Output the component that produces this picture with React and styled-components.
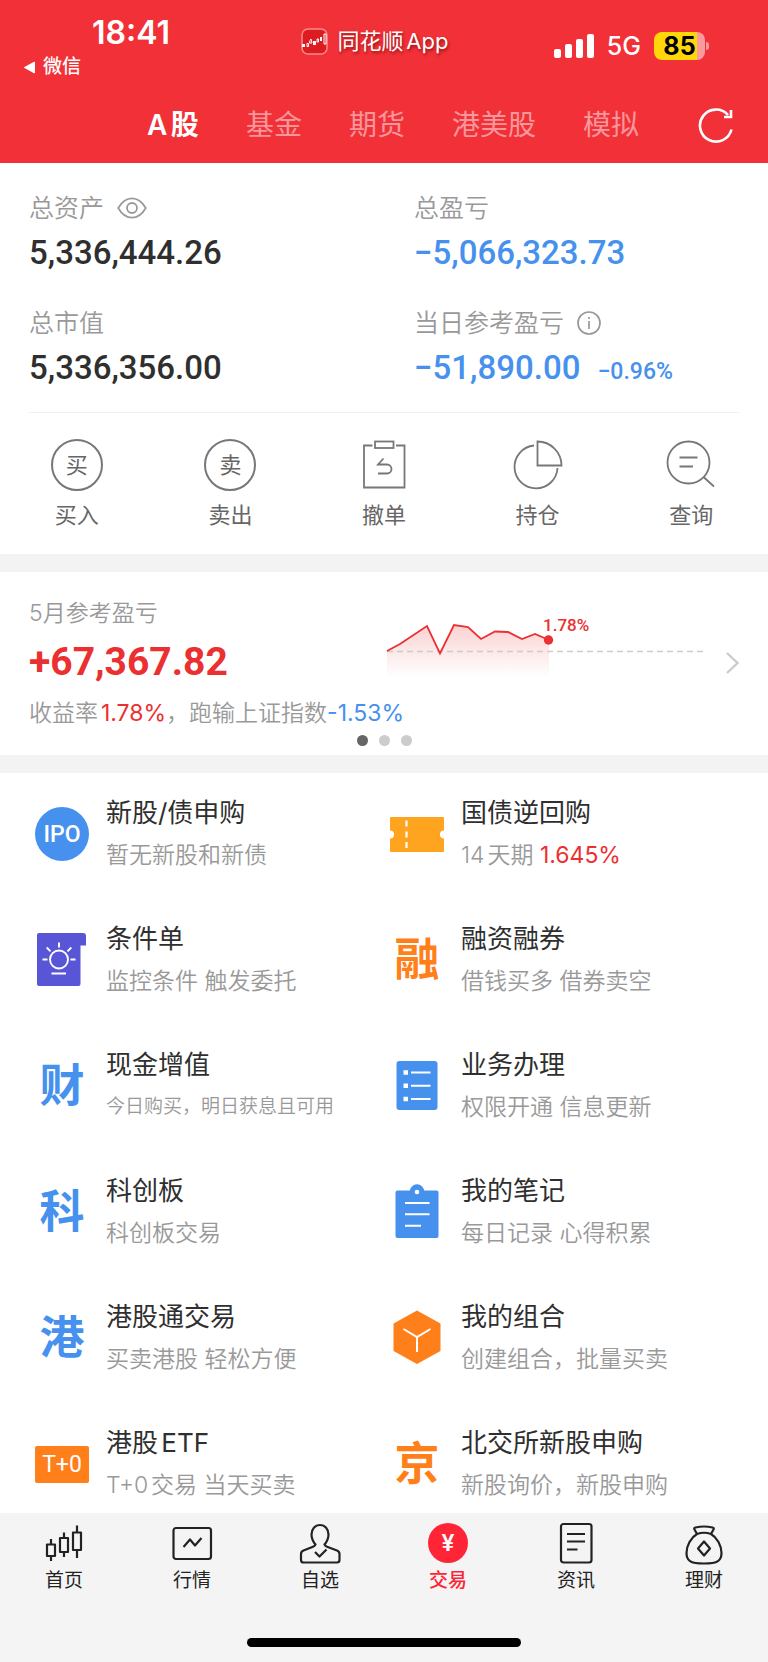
import React from 'react';
import styled, { createGlobalStyle, css } from 'styled-components';

const color = {
  brand: '#f23037',
  red: '#ea3030',
  blue: '#4691ee',
  ink: '#2f2f2f',
  muted: '#999999',
  grey: '#666666',
  band: '#f3f3f3',
  orange: '#ff7f1a',
  amber: '#ffa41f',
  purple: '#5855d6',
};

const numberFont = css`
  font-family: Roboto, 'Liberation Sans', sans-serif;
`;

const GlobalStyle = createGlobalStyle`
  *, *::before, *::after { box-sizing: border-box; }
  body {
    margin: 0;
    background: #ffffff;
    color: ${color.ink};
    font-family: Inter, 'Noto Sans CJK SC', sans-serif;
  }
  button {
    margin: 0;
    padding: 0;
    border: 0;
    background: none;
    color: inherit;
    font: inherit;
    cursor: pointer;
  }
  a { color: inherit; text-decoration: none; }
  h2, p, dl, dt, dd, ul { margin: 0; padding: 0; font-weight: inherit; list-style: none; }
  svg { display: block; flex: none; }
`;

const Page = styled.div`
  min-height: 100vh;
  display: flex;
  flex-direction: column;
`;

/* ---------- header ---------- */

const Header = styled.header`
  height: 163px;
  background: ${color.brand};
  color: #ffffff;
  display: flex;
  flex-direction: column;
`;

const StatusBar = styled.div`
  height: 86px;
  padding: 0 42px 0 23px;
  display: grid;
  grid-template-columns: 1fr auto 1fr;
`;

const ClockBlock = styled.div`
  display: flex;
  flex-direction: column;
  align-items: flex-start;
  padding-top: 14px;
`;

const Clock = styled.span`
  padding-left: 69px;
  font-size: 32px;
  font-weight: 600;
  line-height: 38px;
`;

const BackLink = styled.a`
  display: flex;
  align-items: center;
  gap: 8px;
  font-size: 19px;
  font-weight: 500;
  line-height: 30px;
`;

const AppTag = styled.div`
  align-self: start;
  display: flex;
  align-items: center;
  gap: 10px;
  padding-top: 24px;
  font-size: 22px;
  line-height: 34px;
  text-shadow: 1px 2px 3px rgba(90, 0, 0, 0.6);
  text-autospace: normal;
`;

const StatusIcons = styled.div`
  align-self: start;
  justify-self: end;
  display: flex;
  align-items: center;
  gap: 13px;
  padding: 30px 17px 0 0;
  font-size: 25px;
  font-weight: 500;
  line-height: 32px;
`;

const Battery = styled.div`
  display: flex;
  align-items: center;
  gap: 1px;
`;

const BatteryLevel = styled.span`
  width: 51px;
  height: 28px;
  border-radius: 8px;
  background: linear-gradient(90deg, #ffd60a 85%, #f99a9d 85%);
  color: #000000;
  font-size: 25px;
  font-weight: 700;
  line-height: 28px;
  text-align: center;
`;

const BatteryTip = styled.span`
  width: 3px;
  height: 8px;
  border-radius: 0 3px 3px 0;
  background: #f99a9d;
`;

const TopBar = styled.div`
  height: 77px;
  padding: 0 34px 0 147px;
  display: flex;
  align-items: center;
  justify-content: space-between;
`;

const MarketTabs = styled.nav`
  display: flex;
  gap: 47px;
`;

const MarketTab = styled.button`
  font-size: 28px;
  line-height: 40px;
  white-space: nowrap;
  text-autospace: normal;
  font-weight: ${(p) => (p.$active ? 600 : 400)};
  color: ${(p) => (p.$active ? '#ffffff' : 'rgba(255, 255, 255, 0.5)')};
`;

/* ---------- assets ---------- */

const AssetGrid = styled.dl`
  padding: 27px 0 22px 29px;
  display: grid;
  grid-template-columns: 385fr 354fr;
  row-gap: 30px;
`;

const AssetLabel = styled.dt`
  display: flex;
  align-items: center;
  gap: 13px;
  font-size: 25px;
  font-weight: 350;
  line-height: 36px;
  color: ${color.muted};
`;

const AssetValue = styled.dd`
  display: flex;
  align-items: baseline;
  gap: 17px;
  padding-top: 5px;
  ${numberFont}
  font-size: 33px;
  font-weight: 500;
  line-height: 44px;
  color: ${(p) => (p.$down ? color.blue : color.ink)};
`;

const Rate = styled.span`
  font-size: 23px;
  line-height: 24px;
`;

const Divider = styled.hr`
  margin: 0 29px;
  border: 0;
  height: 1px;
  background: #f0f0f0;
`;

const Actions = styled.nav`
  padding: 26px 0 24px;
  display: grid;
  grid-template-columns: repeat(5, 1fr);
`;

const Action = styled.button`
  display: flex;
  flex-direction: column;
  align-items: center;
  gap: 9px;
  font-size: 22px;
  line-height: 30px;
  color: ${color.grey};
`;

const RingGlyph = styled.span`
  width: 52px;
  height: 52px;
  border: 2px solid #777777;
  border-radius: 50%;
  display: flex;
  align-items: center;
  justify-content: center;
`;

const Band = styled.div`
  height: 18px;
  background: ${color.band};
`;

/* ---------- monthly result ---------- */

const Month = styled.section`
  padding: 24px 0 9px;
`;

const MonthTop = styled.a`
  padding: 0 29px;
  display: flex;
  gap: 10px;
`;

const MonthText = styled.div`
  flex: 1;
`;

const MonthLabel = styled.p`
  font-size: 23px;
  font-weight: 350;
  line-height: 34px;
  color: ${color.muted};
`;

const MonthValue = styled.p`
  padding-top: 4px;
  ${numberFont}
  font-size: 39px;
  font-weight: 700;
  line-height: 56px;
  color: ${color.red};
`;

const MonthNote = styled.p`
  padding: 6px 29px 5px;
  font-size: 23px;
  font-weight: 350;
  line-height: 34px;
  color: ${color.muted};
  text-autospace: normal;
`;

const Tone = styled.span`
  font-weight: 400;
  color: ${(p) => (p.$down ? color.blue : color.red)};
`;

const ChevronSlot = styled.span`
  align-self: flex-end;
  padding-bottom: 16px;
`;

const ChartText = styled.text`
  ${numberFont}
  font-size: 17px;
  font-weight: 500;
  fill: ${color.red};
`;

const Dots = styled.div`
  display: flex;
  justify-content: center;
  gap: 11px;
`;

const Dot = styled.span`
  width: 11px;
  height: 11px;
  border-radius: 50%;
  background: ${(p) => (p.$active ? '#666666' : '#cccccc')};
`;

/* ---------- services ---------- */

const Services = styled.ul`
  padding: 19px 28px 7px 30px;
  display: grid;
  grid-template-columns: 1fr 1fr;
  row-gap: 42px;
`;

const ServiceLink = styled.a`
  display: flex;
  align-items: center;
  gap: 12px;
`;

const IconSlot = styled.span`
  width: 64px;
  display: flex;
  justify-content: center;
`;

const ServiceText = styled.span`
  display: flex;
  flex-direction: column;
  white-space: nowrap;
  text-autospace: normal;
`;

const ServiceTitle = styled.span`
  font-size: 26px;
  line-height: 42px;
  color: ${color.ink};
`;

const ServiceNote = styled.span`
  font-size: ${(p) => (p.$small ? 19 : 23)}px;
  font-weight: 350;
  line-height: 42px;
  color: ${color.muted};
`;

const GlyphIcon = styled.span`
  color: ${(p) => p.$tint};
  font-size: 45px;
  font-weight: 700;
  line-height: 56px;
`;

const Badge = styled.span`
  width: 54px;
  height: ${(p) => (p.$round ? 54 : 37)}px;
  border-radius: ${(p) => (p.$round ? '50%' : '2px')};
  background: ${(p) => p.$tint};
  color: #ffffff;
  display: flex;
  align-items: center;
  justify-content: center;
  ${numberFont}
  font-size: 23px;
  font-weight: ${(p) => (p.$round ? 500 : 400)};
`;

/* ---------- bottom bar ---------- */

const BottomBar = styled.footer`
  margin-top: auto;
  background: #f4f4f4;
  display: flex;
  flex-direction: column;
  align-items: center;
`;

const BottomTabs = styled.nav`
  width: 100%;
  padding-top: 8px;
  display: grid;
  grid-template-columns: repeat(6, 1fr);
`;

const BottomTab = styled.a`
  display: flex;
  flex-direction: column;
  align-items: center;
  gap: 2px;
  font-size: 19px;
  line-height: 28px;
  font-weight: ${(p) => (p.$active ? 500 : 400)};
  color: ${(p) => (p.$active ? '#ff2436' : '#222222')};
`;

const HomeIndicator = styled.div`
  width: 274px;
  height: 9px;
  margin: 43px 0 15px;
  border-radius: 5px;
  background: #000000;
`;

/* ---------- drawings ---------- */

const AppLogo = () => (
  <svg width="27" height="27" viewBox="0 0 27 27">
    <rect x="1" y="1" width="25" height="25" rx="6" fill="#dd1c22" stroke="#f78a8e" strokeWidth="1.5" />
    <g fill="#fff">
      <rect x="1" y="16" width="3" height="3" />
      <rect x="12" y="13" width="3" height="4" />
      <rect x="19" y="9" width="2" height="4" />
    </g>
    <g fill="none" stroke="#fff">
      <path d="M6 15.5v3h1.5v-3zM9 12.5l-0.5 2.5h2.5l-1-4zM16 11v3h1.5v-3zM23 6v10h2V6z" />
    </g>
  </svg>
);

const Signal = () => (
  <svg width="40" height="26" viewBox="0 0 40 26" fill="#fff">
    <rect x="0" y="16" width="7" height="9" rx="2" />
    <rect x="11" y="11" width="7" height="14" rx="2" />
    <rect x="22" y="6" width="7" height="19" rx="2" />
    <rect x="33" y="1" width="7" height="24" rx="2" />
  </svg>
);

const BackArrow = () => (
  <svg width="12" height="13" viewBox="0 0 12 13" fill="#fff">
    <path d="M0.6 6.5 11 0.7Q12 0.5 12 1.5V11.5Q12 12.5 11 12.3Z" />
  </svg>
);

const Refresh = () => (
  <svg width="36" height="36" viewBox="0 0 36 36" fill="none" stroke="#fff" strokeWidth="2.6">
    <path d="M33.5 22.5A16 16 0 1 1 30 8" />
    <path d="M33 3V10H26" />
  </svg>
);

const Eye = () => (
  <svg width="30" height="22" viewBox="0 0 30 22" fill="none" stroke="#999" strokeWidth="1.8">
    <path d="M1.2 11C5 4.5 9.5 1.3 15 1.3S25 4.5 28.8 11C25 17.5 20.5 20.7 15 20.7S5 17.5 1.2 11Z" />
    <circle cx="15" cy="11" r="5" />
  </svg>
);

const Info = () => (
  <svg width="24" height="24" viewBox="0 0 24 24" fill="none" stroke="#999" strokeWidth="1.7">
    <circle cx="12" cy="12" r="11" />
    <path d="M12 10v8M12 6v2" />
  </svg>
);

const lineIcon = { width: 52, height: 52, viewBox: '0 0 52 52', fill: 'none', stroke: '#777', strokeWidth: 1.8 };

const CancelIcon = () => (
  <svg {...lineIcon}>
    <path d="M14.5 6.5H6V48.5H46.5V6.5H38" />
    <rect x="17" y="2.5" width="18.5" height="6.5" />
    <path d="M25.5 19.5 20 25.5H29A4.500 4.500 0 0 1 29 34.500H20" />
  </svg>
);

const PositionIcon = () => (
  <svg {...lineIcon}>
    <path d="M22 6.5A21.5 21.5 0 1 0 45.5 29" />
    <path d="M25.5 2.5V26.5H49.5A24 24 0 0 0 25.5 2.5Z" />
  </svg>
);

const QueryIcon = () => (
  <svg {...lineIcon}>
    <circle cx="23.5" cy="23.5" r="21" />
    <path d="M38.5 38 49 47.5M14.5 18.5H32.5M14.5 27.5H28" />
  </svg>
);

const TrendChart = () => (
  <svg width="330" height="94" viewBox="0 0 330 94">
    <defs>
      <linearGradient id="trendFill" x1="0" y1="0" x2="0" y2="1">
        <stop offset="0" stopColor="#ea3030" stopOpacity="0.22" />
        <stop offset="1" stopColor="#ea3030" stopOpacity="0" />
      </linearGradient>
    </defs>
    <path
      d="M1 55 14 48 41 30 54 57.5 68 29 82 31 95 43 109 35.5 122 36 136 43 149 38 163 44V81H1Z"
      fill="url(#trendFill)"
    />
    <path d="M1 55.500H321" stroke="#cccccc" strokeWidth="1.3" strokeDasharray="6 4" />
    <path
      d="M1 55 14 48 41 30 54 57.5 68 29 82 31 95 43 109 35.5 122 36 136 43 149 38 163 44"
      fill="none"
      stroke="#ea3030"
      strokeWidth="1.8"
    />
    <circle cx="162.5" cy="44" r="4.7" fill="#ea3030" />
    <ChartText x="157" y="35">1.78%</ChartText>
  </svg>
);

const Chevron = () => (
  <svg width="13" height="22" viewBox="0 0 13 22" fill="none" stroke="#ccc" strokeWidth="2.4">
    <path d="M1 1 11.5 11 1 21" />
  </svg>
);

const tile = { width: 56, height: 56, viewBox: '0 0 56 56' };

const ConditionIcon = () => (
  <svg {...tile}>
    <path d="M5 1H49Q52 1 52 4V13.5H46.5V52Q46.5 54 44.5 54H5Q3 54 3 52V3Q3 1 5 1Z" fill={color.purple} />
    <g fill="none" stroke="#fff" strokeWidth="1.9">
      <circle cx="25" cy="27.5" r="9" />
      <path d="M25 10.5V15.5M8.5 27.5H13.5M36.5 27.5H41.5M12.7 15.5 16.5 19.3M37.3 15.5 33.5 19.3M17.5 41.5H32" />
    </g>
  </svg>
);

const TicketIcon = () => (
  <svg {...tile}>
    <path
      d="M2 11H54Q55 11 55 12V24.5A4 4 0 0 0 55 32.5V45Q55 46 54 46H2Q1 46 1 45V32.5A4 4 0 0 0 1 24.5V12Q1 11 2 11Z"
      fill={color.amber}
    />
    <path d="M17.5 14.5V20.5M17.5 25.5V31.5M17.5 36V42" stroke="#fff" strokeWidth="2.2" />
  </svg>
);

const BusinessIcon = () => (
  <svg {...tile}>
    <rect x="7.5" y="3" width="41" height="49" rx="3" fill={color.blue} />
    <path d="M14.5 14.5H19M14.5 27.7H19M14.5 41H19" stroke="#fff" strokeWidth="4.5" />
    <path d="M22 14.5H41.5M22 27.7H41.5M22 41H41.5" stroke="#fff" strokeWidth="2" />
  </svg>
);

const NotesIcon = () => (
  <svg {...tile}>
    <circle cx="28" cy="7.5" r="7.2" fill={color.blue} />
    <rect x="6.5" y="6.5" width="43" height="47.5" rx="2" fill={color.blue} />
    <circle cx="28" cy="8" r="2.3" fill="#fff" />
    <path d="M16 19H40.5M16 30.3H40.5M16 41.7H32" stroke="#fff" strokeWidth="2" />
  </svg>
);

const PortfolioIcon = () => (
  <svg {...tile}>
    <path
      d="M28 1.5 50.5 14V40.5L28 53 5.5 40.5V14Z"
      fill={color.orange}
      stroke={color.orange}
      strokeWidth="2"
      strokeLinejoin="round"
    />
    <path d="M14.5 19 28 27 41.5 19M28 27V42" fill="none" stroke="#fff" strokeWidth="2" />
  </svg>
);

const navIcon = {
  width: 44,
  height: 44,
  viewBox: '0 0 44 44',
  fill: 'none',
  stroke: '#222',
  strokeWidth: 2.2,
  strokeLinejoin: 'round',
};

const HomeIcon = () => (
  <svg {...navIcon}>
    <path d="M5 23.5H13V35H5ZM9 18V23.5M9 35V40M18 17H26V31H18ZM22 11.5V17M22 31V36M31 11.5H39V29H31ZM35 4.5V11.5M35 29V37" />
  </svg>
);

const QuotesIcon = () => (
  <svg {...navIcon}>
    <rect x="3.5" y="7" width="37.5" height="31" rx="2.5" />
    <path d="M13.5 26 20 18.5 25 24.5 31.5 17" />
  </svg>
);

const WatchIcon = () => (
  <svg {...navIcon}>
    <path d="M17.5 23.5C14.5 20 13.5 17 13.5 13.5C13.5 8 17 4 22 4S30.5 8 30.5 13.5C30.5 17 29.5 20 26.5 23.5Q27 25 29 25.7L39 29.5Q41.5 30.5 41.5 33V39Q41.5 41.5 39 41.5H5.5Q3 41.5 3 39V33Q3 30.5 5.5 29.5L15 25.7Q17 25 17.5 23.5Z" />
    <path d="M17 31 21.5 35.5 28.5 28.5" />
  </svg>
);

const YenText = styled.text`
  font-family: Inter, sans-serif;
  font-size: 23px;
  font-weight: 600;
  text-anchor: middle;
  fill: #ffffff;
  stroke: none;
`;

const TradeIcon = () => (
  <svg {...navIcon}>
    <circle cx="22" cy="22" r="20" fill="#ff2436" stroke="none" />
    <YenText x="22" y="30">¥</YenText>
  </svg>
);

const NewsIcon = () => (
  <svg {...navIcon}>
    <rect x="7" y="3" width="30.5" height="38.5" rx="2.5" />
    <path d="M13 13H31M13 20.5H31M13 28.5H23.5" />
  </svg>
);

const WealthIcon = () => (
  <svg {...navIcon}>
    <path d="M15 13 12.5 8.5Q11.5 7 13.5 6.5Q22 4.5 30.5 6.5Q32.5 7 31.5 8.5L29 13" />
    <path d="M15 13Q22 10.5 29 13C35 16.5 39.5 24.5 39.5 32C39.5 39.5 36 42.5 22 42.5S4.5 39.5 4.5 32C4.5 24.5 9 16.5 15 13Z" />
    <path d="M22 20.5 28 27.5 22 34.5 16 27.5Z" />
  </svg>
);

/* ---------- data ---------- */

const markets = ['A股', '基金', '期货', '港美股', '模拟'];

const assets = [
  { label: '总资产', value: '5,336,444.26', icon: <Eye /> },
  { label: '总盈亏', value: '−5,066,323.73', down: true },
  { label: '总市值', value: '5,336,356.00' },
  { label: '当日参考盈亏', value: '−51,890.00', rate: '−0.96%', down: true, icon: <Info /> },
];

const actions = [
  { label: '买入', icon: <RingGlyph aria-hidden="true">买</RingGlyph> },
  { label: '卖出', icon: <RingGlyph aria-hidden="true">卖</RingGlyph> },
  { label: '撤单', icon: <CancelIcon /> },
  { label: '持仓', icon: <PositionIcon /> },
  { label: '查询', icon: <QueryIcon /> },
];

const services = [
  { title: '新股/债申购', note: '暂无新股和新债', icon: <Badge $round $tint={color.blue}>IPO</Badge> },
  { title: '国债逆回购', note: <>14天期 <Tone>1.645%</Tone></>, icon: <TicketIcon /> },
  { title: '条件单', note: '监控条件 触发委托', icon: <ConditionIcon /> },
  { title: '融资融券', note: '借钱买多 借券卖空', icon: <GlyphIcon $tint={color.orange}>融</GlyphIcon> },
  { title: '现金增值', note: '今日购买，明日获息且可用', small: true, icon: <GlyphIcon $tint={color.blue}>财</GlyphIcon> },
  { title: '业务办理', note: '权限开通 信息更新', icon: <BusinessIcon /> },
  { title: '科创板', note: '科创板交易', icon: <GlyphIcon $tint={color.blue}>科</GlyphIcon> },
  { title: '我的笔记', note: '每日记录 心得积累', icon: <NotesIcon /> },
  { title: '港股通交易', note: '买卖港股 轻松方便', icon: <GlyphIcon $tint={color.blue}>港</GlyphIcon> },
  { title: '我的组合', note: '创建组合，批量买卖', icon: <PortfolioIcon /> },
  { title: '港股ETF', note: 'T+0交易 当天买卖', icon: <Badge $tint={color.orange}>T+0</Badge> },
  { title: '北交所新股申购', note: '新股询价，新股申购', icon: <GlyphIcon $tint={color.orange}>京</GlyphIcon> },
];

const bottomTabs = [
  { label: '首页', icon: <HomeIcon /> },
  { label: '行情', icon: <QuotesIcon /> },
  { label: '自选', icon: <WatchIcon /> },
  { label: '交易', icon: <TradeIcon />, active: true },
  { label: '资讯', icon: <NewsIcon /> },
  { label: '理财', icon: <WealthIcon /> },
];

export default function App() {
  return (
    <Page>
      <GlobalStyle />
      <Header>
        <StatusBar>
          <ClockBlock>
            <Clock>18:41</Clock>
            <BackLink href="#wechat"><BackArrow />微信</BackLink>
          </ClockBlock>
          <AppTag><AppLogo />同花顺App</AppTag>
          <StatusIcons>
            <Signal />
            5G
            <Battery>
              <BatteryLevel>85</BatteryLevel>
              <BatteryTip />
            </Battery>
          </StatusIcons>
        </StatusBar>
        <TopBar>
          <MarketTabs>
            {markets.map((name, i) => (
              <MarketTab key={name} type="button" $active={i === 0}>{name}</MarketTab>
            ))}
          </MarketTabs>
          <button type="button" aria-label="刷新"><Refresh /></button>
        </TopBar>
      </Header>

      <main>
        <AssetGrid>
          {assets.map((a) => (
            <div key={a.label}>
              <AssetLabel>{a.label}{a.icon}</AssetLabel>
              <AssetValue $down={a.down}>
                {a.value}
                {a.rate && <Rate>{a.rate}</Rate>}
              </AssetValue>
            </div>
          ))}
        </AssetGrid>
        <Divider />
        <Actions>
          {actions.map((a) => (
            <Action key={a.label} type="button">{a.icon}{a.label}</Action>
          ))}
        </Actions>
        <Band />
        <Month>
          <MonthTop href="#month">
            <MonthText>
              <MonthLabel>5月参考盈亏</MonthLabel>
              <MonthValue>+67,367.82</MonthValue>
            </MonthText>
            <TrendChart />
            <ChevronSlot><Chevron /></ChevronSlot>
          </MonthTop>
          <MonthNote>
            收益率<Tone>1.78%</Tone>，跑输上证指数<Tone $down>-1.53%</Tone>
          </MonthNote>
          <Dots>
            <Dot $active />
            <Dot />
            <Dot />
          </Dots>
        </Month>
        <Band />
        <Services>
          {services.map((s) => (
            <li key={s.title}>
              <ServiceLink href="#service">
                <IconSlot>{s.icon}</IconSlot>
                <ServiceText>
                  <ServiceTitle>{s.title}</ServiceTitle>
                  <ServiceNote $small={s.small}>{s.note}</ServiceNote>
                </ServiceText>
              </ServiceLink>
            </li>
          ))}
        </Services>
      </main>

      <BottomBar>
        <BottomTabs>
          {bottomTabs.map((t) => (
            <BottomTab key={t.label} href="#tab" $active={t.active}>{t.icon}{t.label}</BottomTab>
          ))}
        </BottomTabs>
        <HomeIndicator />
      </BottomBar>
    </Page>
  );
}
